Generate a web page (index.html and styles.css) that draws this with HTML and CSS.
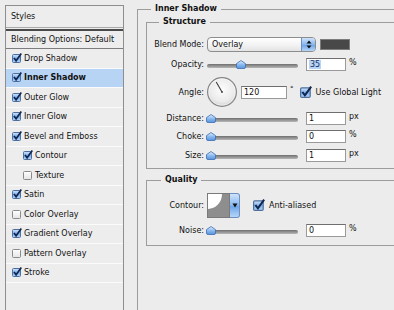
FILE: index.html
```html
<!DOCTYPE html>
<html lang="en">
<head>
<meta charset="utf-8">
<title>Layer Style – Inner Shadow</title>
<link rel="stylesheet" href="styles.css">
</head>
<body>
<svg class="defs" aria-hidden="true" width="0" height="0">
  <defs>
    <linearGradient id="cbOn" x1="0" y1="0" x2="0" y2="1">
      <stop offset="0" stop-color="#d3e5fa"/>
      <stop offset="0.5" stop-color="#7eaeea"/>
      <stop offset="1" stop-color="#b4d4f8"/>
    </linearGradient>
    <linearGradient id="cbOff" x1="0" y1="0" x2="0" y2="1">
      <stop offset="0" stop-color="#ffffff"/>
      <stop offset="1" stop-color="#e4e4e4"/>
    </linearGradient>
    <linearGradient id="knob" x1="0" y1="0" x2="0" y2="1">
      <stop offset="0" stop-color="#e6f1fd"/>
      <stop offset="0.55" stop-color="#86b6ee"/>
      <stop offset="1" stop-color="#5994de"/>
    </linearGradient>
    <radialGradient id="dialFill" cx="0.5" cy="0.42" r="0.6">
      <stop offset="0" stop-color="#fdfdfd"/>
      <stop offset="0.7" stop-color="#ebebeb"/>
      <stop offset="1" stop-color="#cdcdcd"/>
    </radialGradient>
  </defs>
</svg>

<div class="dialog">
  <aside class="styles-panel">
    <div class="panel-head">Styles</div>
    <div class="blend-head">Blending Options: Default</div>
    <ul class="fx-list">
      <li class="fx"><svg class="cb" viewBox="0 0 10 10"><rect x="0.5" y="1.5" width="8" height="8" rx="1" fill="url(#cbOn)" stroke="#4d6f9e"/><path d="M2 5 L4.1 7.8 L9.3 0.6" fill="none" stroke="#0f2750" stroke-width="1.7"/></svg>Drop Shadow</li>
      <li class="fx selected"><svg class="cb" viewBox="0 0 10 10"><rect x="0.5" y="1.5" width="8" height="8" rx="1" fill="url(#cbOn)" stroke="#4d6f9e"/><path d="M2 5 L4.1 7.8 L9.3 0.6" fill="none" stroke="#0f2750" stroke-width="1.7"/></svg>Inner Shadow</li>
      <li class="fx"><svg class="cb" viewBox="0 0 10 10"><rect x="0.5" y="1.5" width="8" height="8" rx="1" fill="url(#cbOn)" stroke="#4d6f9e"/><path d="M2 5 L4.1 7.8 L9.3 0.6" fill="none" stroke="#0f2750" stroke-width="1.7"/></svg>Outer Glow</li>
      <li class="fx"><svg class="cb" viewBox="0 0 10 10"><rect x="0.5" y="1.5" width="8" height="8" rx="1" fill="url(#cbOn)" stroke="#4d6f9e"/><path d="M2 5 L4.1 7.8 L9.3 0.6" fill="none" stroke="#0f2750" stroke-width="1.7"/></svg>Inner Glow</li>
      <li class="fx"><svg class="cb" viewBox="0 0 10 10"><rect x="0.5" y="1.5" width="8" height="8" rx="1" fill="url(#cbOn)" stroke="#4d6f9e"/><path d="M2 5 L4.1 7.8 L9.3 0.6" fill="none" stroke="#0f2750" stroke-width="1.7"/></svg>Bevel and Emboss</li>
      <li class="fx sub"><svg class="cb" viewBox="0 0 10 10"><rect x="0.5" y="1.5" width="8" height="8" rx="1" fill="url(#cbOn)" stroke="#4d6f9e"/><path d="M2 5 L4.1 7.8 L9.3 0.6" fill="none" stroke="#0f2750" stroke-width="1.7"/></svg>Contour</li>
      <li class="fx sub"><svg class="cb" viewBox="0 0 10 10"><rect x="0.5" y="1.5" width="8" height="8" rx="1" fill="url(#cbOff)" stroke="#8a8a8a"/></svg>Texture</li>
      <li class="fx"><svg class="cb" viewBox="0 0 10 10"><rect x="0.5" y="1.5" width="8" height="8" rx="1" fill="url(#cbOn)" stroke="#4d6f9e"/><path d="M2 5 L4.1 7.8 L9.3 0.6" fill="none" stroke="#0f2750" stroke-width="1.7"/></svg>Satin</li>
      <li class="fx"><svg class="cb" viewBox="0 0 10 10"><rect x="0.5" y="1.5" width="8" height="8" rx="1" fill="url(#cbOff)" stroke="#8a8a8a"/></svg>Color Overlay</li>
      <li class="fx"><svg class="cb" viewBox="0 0 10 10"><rect x="0.5" y="1.5" width="8" height="8" rx="1" fill="url(#cbOn)" stroke="#4d6f9e"/><path d="M2 5 L4.1 7.8 L9.3 0.6" fill="none" stroke="#0f2750" stroke-width="1.7"/></svg>Gradient Overlay</li>
      <li class="fx"><svg class="cb" viewBox="0 0 10 10"><rect x="0.5" y="1.5" width="8" height="8" rx="1" fill="url(#cbOff)" stroke="#8a8a8a"/></svg>Pattern Overlay</li>
      <li class="fx"><svg class="cb" viewBox="0 0 10 10"><rect x="0.5" y="1.5" width="8" height="8" rx="1" fill="url(#cbOn)" stroke="#4d6f9e"/><path d="M2 5 L4.1 7.8 L9.3 0.6" fill="none" stroke="#0f2750" stroke-width="1.7"/></svg>Stroke</li>
    </ul>
  </aside>

  <main class="effect">
    <fieldset class="group outer">
      <legend>Inner Shadow</legend>

      <fieldset class="group structure">
        <legend>Structure</legend>

        <div class="row r-blend">
          <span class="lbl">Blend Mode:</span>
          <div class="select">
            <span class="select-value">Overlay</span>
            <span class="select-btn">
              <svg viewBox="0 0 6 9" width="6" height="9"><path d="M3 0.5 L5.5 3.5 H0.5 Z M3 8.5 L5.5 5.5 H0.5 Z" fill="#111"/></svg>
            </span>
          </div>
          <span class="swatch"></span>
        </div>

        <div class="row r-opacity">
          <span class="lbl">Opacity:</span>
          <div class="slider">
            <span class="track"></span>
            <svg class="knob" style="margin-left:30px" viewBox="0 0 10 9" width="10" height="9"><path d="M5 0.5 L9.5 3.6 V7 Q9.5 8.5 8 8.5 H2 Q0.5 8.5 0.5 7 V3.6 Z" fill="url(#knob)" stroke="#3c6cae" stroke-width="0.8"/></svg>
          </div>
          <span class="field"><span class="sel-text">35</span></span>
          <span class="unit">%</span>
        </div>

        <div class="row r-angle">
          <span class="lbl">Angle:</span>
          <svg class="dial" viewBox="0 0 30 30" width="30" height="30">
            <circle cx="15" cy="15" r="14.4" fill="url(#dialFill)" stroke="#858585" stroke-width="1.2"/>
            <circle cx="15" cy="15" r="13.2" fill="none" stroke="#fff" stroke-opacity="0.6" stroke-width="0.8"/>
            <line x1="15" y1="15" x2="9.2" y2="5" stroke="#3d3d3d" stroke-width="1.1"/>
            <circle cx="15" cy="15" r="0.9" fill="#3d3d3d"/>
          </svg>
          <span class="field wide">120</span>
          <span class="deg">°</span>
          <label class="check">
            <svg class="cb big" viewBox="0 0 10 10"><rect x="0.5" y="1.5" width="8" height="8" rx="1" fill="url(#cbOn)" stroke="#4d6f9e"/><path d="M2 5 L4.1 7.8 L9.3 0.6" fill="none" stroke="#0f2750" stroke-width="1.7"/></svg>
            Use Global Light
          </label>
        </div>

        <div class="row r-dist">
          <span class="lbl">Distance:</span>
          <div class="slider">
            <span class="track"></span>
            <svg class="knob" style="margin-left:0px" viewBox="0 0 10 9" width="10" height="9"><path d="M5 0.5 L9.5 3.6 V7 Q9.5 8.5 8 8.5 H2 Q0.5 8.5 0.5 7 V3.6 Z" fill="url(#knob)" stroke="#3c6cae" stroke-width="0.8"/></svg>
          </div>
          <span class="field">1</span>
          <span class="unit">px</span>
        </div>

        <div class="row r-choke">
          <span class="lbl">Choke:</span>
          <div class="slider">
            <span class="track"></span>
            <svg class="knob" style="margin-left:0px" viewBox="0 0 10 9" width="10" height="9"><path d="M5 0.5 L9.5 3.6 V7 Q9.5 8.5 8 8.5 H2 Q0.5 8.5 0.5 7 V3.6 Z" fill="url(#knob)" stroke="#3c6cae" stroke-width="0.8"/></svg>
          </div>
          <span class="field">0</span>
          <span class="unit">%</span>
        </div>

        <div class="row r-size">
          <span class="lbl">Size:</span>
          <div class="slider">
            <span class="track"></span>
            <svg class="knob" style="margin-left:0px" viewBox="0 0 10 9" width="10" height="9"><path d="M5 0.5 L9.5 3.6 V7 Q9.5 8.5 8 8.5 H2 Q0.5 8.5 0.5 7 V3.6 Z" fill="url(#knob)" stroke="#3c6cae" stroke-width="0.8"/></svg>
          </div>
          <span class="field">1</span>
          <span class="unit">px</span>
        </div>
      </fieldset>

      <fieldset class="group quality">
        <legend>Quality</legend>

        <div class="row r-contour">
          <span class="lbl">Contour:</span>
          <div class="contour-pick">
            <svg class="contour-thumb" viewBox="0 0 23 25" width="23" height="25">
              <rect x="0.5" y="0.5" width="22" height="24" fill="#8e8e8e" stroke="#7a7a7a"/>
              <path d="M1 1 H15 A14 15 0 0 1 1 16 Z" fill="#fff"/>
            </svg>
            <span class="contour-btn">
              <svg viewBox="0 0 6 5" width="6" height="5"><path d="M0.5 0.5 H5.5 L3 4.5 Z" fill="#111"/></svg>
            </span>
          </div>
          <label class="check aa">
            <svg class="cb big" viewBox="0 0 10 10"><rect x="0.5" y="1.5" width="8" height="8" rx="1" fill="url(#cbOn)" stroke="#4d6f9e"/><path d="M2 5 L4.1 7.8 L9.3 0.6" fill="none" stroke="#0f2750" stroke-width="1.7"/></svg>
            Anti-aliased
          </label>
        </div>

        <div class="row r-noise">
          <span class="lbl">Noise:</span>
          <div class="slider">
            <span class="track"></span>
            <svg class="knob" style="margin-left:0px" viewBox="0 0 10 9" width="10" height="9"><path d="M5 0.5 L9.5 3.6 V7 Q9.5 8.5 8 8.5 H2 Q0.5 8.5 0.5 7 V3.6 Z" fill="url(#knob)" stroke="#3c6cae" stroke-width="0.8"/></svg>
          </div>
          <span class="field">0</span>
          <span class="unit">%</span>
        </div>
      </fieldset>
    </fieldset>
  </main>
</div>
</body>
</html>
```

FILE: styles.css
```css
* { box-sizing: border-box; }

html, body { margin: 0; padding: 0; }

body {
  width: 394px;
  height: 310px;
  overflow: hidden;
  background: #ececec;
  color: #111;
  font-family: "DejaVu Sans", Verdana, sans-serif;
  font-size: 8px;
}

.defs { display: block; width: 0; height: 0; overflow: hidden; }

.dialog {
  display: flex;
  align-items: flex-start;
  height: 310px;
  padding: 4px 0 0 5px;
}

/* ---------- left styles list ---------- */
.styles-panel {
  flex: none;
  width: 119px;
  height: 305px;
  margin-top: 1px;
  border: 1px solid #8e8e8e;
  border-bottom: 0;
  background: #ededed;
}

.panel-head {
  height: 22px;
  line-height: 21px;
  padding-left: 5px;
  border-bottom: 1px solid #a9a9a9;
}

.blend-head {
  margin-top: 1px;
  height: 20px;
  line-height: 17px;
  padding-left: 5px;
  border-top: 2px solid #4a4a4a;
  border-bottom: 1px solid #7d7d7d;
}

.fx-list { list-style: none; margin: 0; padding: 0; }

.fx {
  display: flex;
  align-items: center;
  height: 19.5px;
  padding-left: 6px;
  border-bottom: 1px solid #fbfbfb;
  white-space: nowrap;
}

.fx.sub { padding-left: 17px; }

.fx.selected { background: #b8d4f5; font-weight: bold; }

.cb { width: 10px; height: 10px; flex: none; margin-right: 2px; margin-top: -1px; }
.cb.big { width: 12px; height: 12px; margin-right: 4px; }

/* ---------- right effect panel ---------- */
.effect { flex: 1; margin-left: 13px; min-width: 0; }

.group {
  margin: 0;
  padding: 0;
  min-width: 0;
  border: 0;
  border-top: 1px solid #9c9c9c;
  border-left: 1px solid #9c9c9c;
}

.group > legend {
  font-weight: bold;
  line-height: 10px;
  padding: 0 4px;
}

.outer { height: 306px; }
.outer > legend { margin-left: 13px; }

.structure {
  margin: 3px 0 0 8px;
  padding: 9px 0 4px 0;
  border-bottom: 1px solid #9c9c9c;
}
.structure > legend { margin-left: 12px; }

.quality {
  margin: 6px 0 0 8px;
  padding: 8px 0 7px 0;
  border-bottom: 1px solid #9c9c9c;
}
.quality > legend { margin-left: 14px; }

.row { display: flex; align-items: center; white-space: nowrap; }

.r-blend { height: 16px; }
.r-opacity { height: 16px; margin-top: 4px; }
.r-angle { height: 30px; margin-top: 5px; }
.r-dist { height: 18px; margin-top: 2px; }
.r-choke { height: 19px; }
.r-size { height: 18px; }
.r-contour { height: 25px; }
.r-noise { height: 16px; margin-top: 4px; }

.lbl {
  flex: none;
  width: 57px;
  margin-right: 2px;
  text-align: right;
}

/* select */
.select {
  display: flex;
  width: 109px;
  height: 15px;
  margin-left: 1px;
  border: 1px solid #8d8d8d;
  border-radius: 4px;
  overflow: hidden;
  background: linear-gradient(#ffffff, #f1f1f1 60%, #e3e3e3);
}
.select-value { flex: 1; padding-left: 4px; line-height: 13px; }
.select-btn {
  display: flex;
  align-items: center;
  justify-content: center;
  width: 14px;
  border-left: 1px solid #6b8fc2;
  background: linear-gradient(#cfe3fa, #87b7ef 50%, #6aa2e6 51%, #b5d6f8);
}

.swatch {
  width: 30px;
  height: 11px;
  margin-left: 4px;
  background: #484848;
  border: 1px solid #7d7d7d;
}

/* slider */
.slider {
  display: grid;
  align-items: end;
  width: 92px;
  height: 9px;
}
.slider > * { grid-area: 1 / 1; }
.track {
  height: 4px;
  margin: 0 0 1px 1px;
  border-radius: 2px;
  background: linear-gradient(#6f6f6f, #9a9a9a 60%, #b8b8b8);
}
.knob { display: block; width: 10px; height: 9px; }

/* text fields */
.field {
  width: 40px;
  height: 13px;
  margin-left: 8px;
  padding-left: 2px;
  line-height: 11px;
  background: #fff;
  border: 1px solid #9a9a9a;
  border-top-color: #6e6e6e;
}
.field.wide { width: 46px; margin-left: 4px; }
.sel-text { background: #b6d3f8; color: #1a2e5a; padding: 0 1px; }

.unit { margin-left: 3px; margin-bottom: 4px; }
.deg { margin-left: 3px; margin-bottom: 6px; font-size: 7px; }

.dial { display: block; margin-left: 1px; flex: none; }

.check { display: flex; align-items: center; margin-left: 6px; }
.check.aa { margin-left: 13px; }

/* contour picker */
.contour-pick {
  display: flex;
  height: 25px;
  margin-left: 1px;
}
.contour-thumb { display: block; }
.contour-btn {
  display: flex;
  align-items: center;
  justify-content: center;
  width: 10px;
  border: 1px solid #6b8fc2;
  border-left: 0;
  border-radius: 0 3px 3px 0;
  background: linear-gradient(#cfe3fa, #87b7ef 50%, #6aa2e6 51%, #b5d6f8);
}
```
